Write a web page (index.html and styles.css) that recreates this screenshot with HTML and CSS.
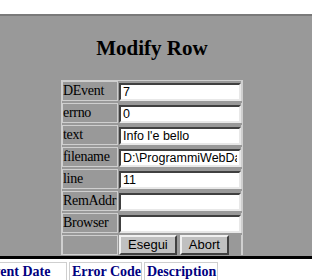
FILE: index.html
```html
<!DOCTYPE html>
<html lang="en">
<head>
    <meta charset="UTF-8">
    <title>Modify Row</title>
    <link rel="stylesheet" href="styles.css">
</head>
<body>

    <div class="panel">
        <h1 class="title">Modify Row</h1>

        <!-- Edit form -->
        <form class="edit">
            <div class="label">DEvent</div>
            <div class="value"><input class="field" type="text" value="7"></div>

            <div class="label">errno</div>
            <div class="value"><input class="field" type="text" value="0"></div>

            <div class="label">text</div>
            <div class="value"><input class="field" type="text" value="Info l'e bello"></div>

            <div class="label">filename</div>
            <div class="value"><input class="field" type="text" value="D:\ProgrammiWebDati\log.txt"></div>

            <div class="label">line</div>
            <div class="value"><input class="field" type="text" value="11"></div>

            <div class="label">RemAddr</div>
            <div class="value"><input class="field" type="text" value=""></div>

            <div class="label">Browser</div>
            <div class="value"><input class="field" type="text" value=""></div>

            <div class="label"></div>
            <div class="value buttons">
                <button type="button" class="btn">Esegui</button>
                <button type="button" class="btn">Abort</button>
            </div>
        </form>
    </div>

    <!-- Log table header -->
    <div class="head">
        <div class="th th-date">Event Date</div>
        <div class="th th-code">Error Code</div>
        <div class="th th-desc">Description</div>
    </div>

</body>
</html>
```

FILE: styles.css
```css
* {
    box-sizing: border-box;
}

body {
    margin: 0;
    padding-top: 14px;
    background-color: #fff;
    font-family: "Liberation Serif", "Times New Roman", serif;
    overflow: hidden;
}

.panel {
    background-color: #999;
    border-top: 2px solid #7a7a7a;
    border-bottom: 3px solid #000;
    padding: 20px 8px 1px 0;
    display: flex;
    flex-direction: column;
    align-items: center;
}

.title {
    margin: 0 0 20px 0;
    font-size: 21px;
    line-height: 24px;
    font-weight: bold;
    color: #000;
}

.edit {
    display: grid;
    grid-template-columns: 56px 123px;
    grid-auto-rows: 20px;
    column-gap: 1px;
    row-gap: 2px;
    border: 1px solid #cfcfcf;
    border-bottom: 0;
    margin: 0;
}

.label {
    border: 1px solid #cfcfcf;
    font-size: 14px;
    letter-spacing: -0.3px;
    line-height: 18px;
    white-space: nowrap;
    overflow: hidden;
    color: #000;
}

.value {
    border-right: 1px solid #cfcfcf;
}

.field {
    display: block;
    width: 122px;
    height: 18px;
    margin: 2px 0 0 0;
    padding: 0 2px;
    border: 2px solid;
    border-color: #404040 #e8e8e8 #e8e8e8 #404040;
    background: #fff;
    font-family: "Liberation Sans", Arial, sans-serif;
    font-size: 12.5px;
    line-height: 14px;
    color: #000;
    outline: none;
}

.buttons {
    display: flex;
    gap: 3px;
    align-items: flex-end;
}

.btn {
    height: 20px;
    padding: 0 7px;
    border: 2px solid;
    border-color: #f0f0f0 #404040 #404040 #f0f0f0;
    background-color: #c0c0c0;
    font-family: "Liberation Sans", Arial, sans-serif;
    font-size: 13px;
    line-height: 14px;
    color: #000;
}

.head {
    display: flex;
    gap: 2px;
    margin: 3px 0 0 -19px;
}

.th {
    border: 1px solid #cfcfcf;
    padding: 1px 2px;
    font-size: 14px;
    line-height: 16px;
    font-weight: bold;
    color: #000080;
    white-space: nowrap;
}

.th-date {
    width: 86px;
}

.th-code {
    width: 73px;
}

.th-desc {
    width: 74px;
}
```
